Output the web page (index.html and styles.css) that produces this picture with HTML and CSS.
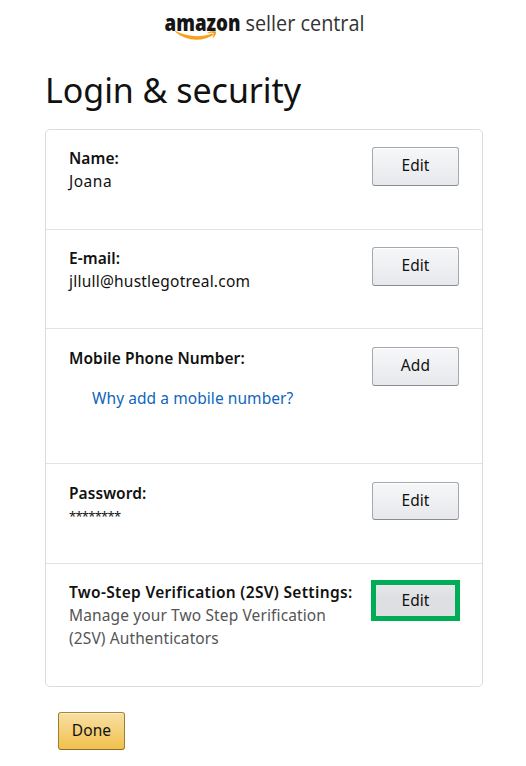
FILE: index.html
```html
<!DOCTYPE html>
<html lang="en">
<head>
  <meta charset="UTF-8" />
  <meta name="viewport" content="width=device-width, initial-scale=1.0"/>
  <title>Login &amp; security</title>
  <link rel="stylesheet" href="styles.css">
</head>
<body>
  <header class="logo-container">
    <svg class="logo" width="210" height="40" viewBox="0 0 210 40">
      <text class="logo-bold" x="0.5" y="23.5" textLength="76" lengthAdjust="spacingAndGlyphs">amazon</text>
      <text class="logo-light" x="81.5" y="23.5" textLength="119" lengthAdjust="spacingAndGlyphs">seller central</text>
      <path d="M11 24.5 C22 34.500 38 35 49.500 28 L48 26.500 C36 31 23 29.500 11.500 24 Z" fill="#f9a11b"/>
      <path d="M43.500 25.600 Q48 23 52.200 24.500 Q52.500 28 48.500 31.500 Q50 28 49.200 26 Q47 25.400 43.500 26.200 Z" fill="#f9a11b"/>
    </svg>
  </header>

  <main class="container">
    <h1>Login &amp; security</h1>

    <div class="box">
      <div class="row">
        <div class="info">
          <strong>Name:</strong>
          <span class="name">Joana</span>
        </div>
        <button class="btn">Edit</button>
      </div>
      <div class="row row-email">
        <div class="info">
          <strong>E-mail:</strong>
          <span class="email">jllull@hustlegotreal.com</span>
        </div>
        <button class="btn">Edit</button>
      </div>
      <div class="row row-phone">
        <div class="info">
          <strong>Mobile Phone Number:</strong>
          <a class="why" href="#">Why add a mobile number?</a>
        </div>
        <button class="btn">Add</button>
      </div>
      <div class="row row-password">
        <div class="info">
          <strong>Password:</strong>
          <span class="password">********</span>
        </div>
        <button class="btn">Edit</button>
      </div>
      <div class="row row-2sv">
        <div class="info">
          <strong class="sv-label">Two-Step Verification (2SV) Settings:</strong>
          <span class="hint">Manage your Two Step Verification<br>(2SV) Authenticators</span>
        </div>
        <button class="btn btn-focus">Edit</button>
      </div>
    </div>

    <button class="btn btn-done">Done</button>
  </main>
</body>
</html>
```
FILE: styles.css
```css
* {
  box-sizing: border-box;
}
body {
  margin: 0;
  background: #fff;
  color: #111;
  font-family: "Noto Sans", "Open Sans", sans-serif;
  font-size: 15.5px;
  line-height: 23px;
}
.logo-container {
  padding: 7px 0 0 164px;
  height: 65px;
}
.logo {
  display: block;
  overflow: visible;
}
.logo-bold {
  font-family: "Open Sans", "Noto Sans", sans-serif;
  font-size: 22px;
  font-weight: 800;
  fill: #151515;
}
.logo-light {
  font-family: "Open Sans", "Noto Sans", sans-serif;
  font-size: 22.5px;
  fill: #333;
}
.container {
  width: 438px;
  margin-left: 45px;
}
h1 {
  margin: 0 0 14px;
  font-size: 34px;
  font-weight: 400;
  line-height: 50px;
  letter-spacing: -0.05px;
}
.box {
  border: 1px solid #d9dbe0;
  border-radius: 5px;
}
.row {
  display: flex;
  justify-content: space-between;
  align-items: flex-start;
  height: 100px;
  padding: 17px 23px 0;
  border-bottom: 1px solid #e3e3e3;
}
.row-email {
  height: 99px;
}
.row-phone {
  height: 135px;
  padding-top: 18px;
}
.row-password {
  padding-top: 18px;
}
.row-2sv {
  height: 122px;
  border-bottom: 0;
}
.info {
  display: flex;
  flex-direction: column;
  align-items: flex-start;
  white-space: nowrap;
  letter-spacing: 0.07px;
}
.info strong {
  font-weight: 600;
}
.info .sv-label {
  letter-spacing: 0.32px;
}
.name {
  letter-spacing: 0.5px;
}
.email {
  letter-spacing: 0.22px;
}
.why {
  margin: 17px 0 0 23px;
  color: #0f66bd;
  text-decoration: none;
}
.password {
  font-size: 13px;
  letter-spacing: -0.75px;
}
.hint {
  color: #555;
  letter-spacing: 0.12px;
}
.btn {
  flex-shrink: 0;
  width: 87px;
  height: 39px;
  padding: 0 0 2px;
  border: 1px solid #a5a8af;
  border-bottom-color: #898c94;
  border-radius: 3px;
  background: linear-gradient(#f6f7f9, #e7e8eb);
  box-shadow: inset 0 1px 0 #fff;
  color: #111;
  font: inherit;
  letter-spacing: 0.1px;
  cursor: pointer;
}
.row-password .btn {
  height: 38px;
}
.btn-focus {
  width: 89px;
  height: 41px;
  margin: -1px -1px 0 0;
  padding-bottom: 1px;
  border: 5px solid #00ac56;
  border-radius: 0;
  background: linear-gradient(#e7e8eb, #dedfe3 40%);
  box-shadow: none;
}
.btn-done {
  display: block;
  width: 67px;
  height: 38px;
  margin: 25px 0 0 13px;
  border-color: #a88734 #a07c2d #8d6b24;
  background: linear-gradient(#f8dfa5, #f0c14b);
  box-shadow: inset 0 1px 0 #fbecc8;
}
```
